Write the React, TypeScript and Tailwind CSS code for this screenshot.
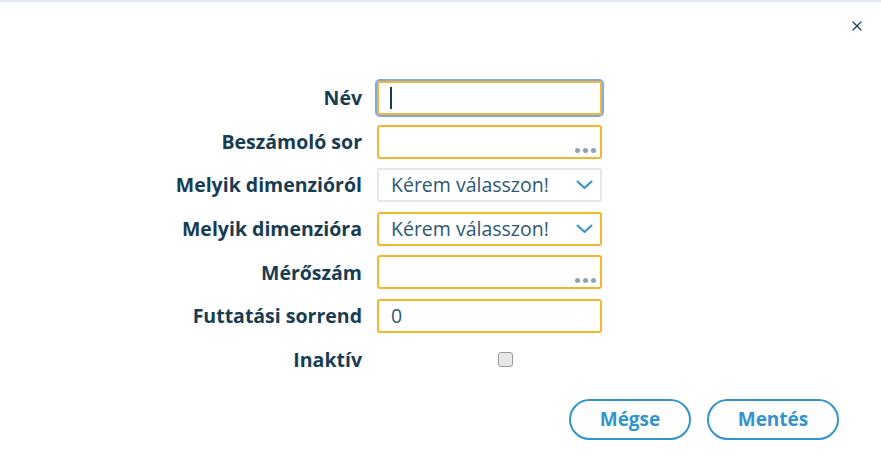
import { X } from "lucide-react";

const labelCls = "w-[200px] text-right font-bold text-[19.5px] text-[#173d55] leading-none";

function Dots() {
    return (
        <span className="absolute right-[4px] bottom-[4px] flex gap-[3px]">
            <span className="w-[5px] h-[5px] rounded-full bg-[#8ea3b8]" />
            <span className="w-[5px] h-[5px] rounded-full bg-[#8ea3b8]" />
            <span className="w-[5px] h-[5px] rounded-full bg-[#8ea3b8]" />
        </span>
    );
}

function SelectBox({ required }: { required?: boolean }) {
    return (
        <div
            className={
                required
                    ? "w-[225px] h-[34px] rounded-[3px] border-2 border-[#f8b42c] flex items-center justify-between pl-[12px] pr-[7px]"
                    : "w-[225px] h-[34px] rounded-[3px] border-2 border-[#e3e8ee] flex items-center justify-between pl-[12px] pr-[7px]"
            }
        >
            <span className="text-[19.5px] text-[#2b5877] leading-none">Kérem válasszon!</span>
            <svg width="17" height="10" viewBox="0 0 17 10" fill="none">
                <polyline points="1.5,1.5 8.5,8 15.5,1.5" stroke="#2f95cf" strokeWidth="2" strokeLinecap="round" strokeLinejoin="round" />
            </svg>
        </div>
    );
}

export default function App() {
    return (
        <div className="w-[881px] h-[460px] bg-white border-t-2 border-[#e3e9f0] relative" style={{ fontFamily: '"Open Sans", sans-serif' }}>
            <button className="absolute right-[16px] top-[16px] text-[#173d55]">
                <X size={16} strokeWidth={1.8} />
            </button>

            <div className="pt-[79px] pl-[162px] flex flex-col gap-[9.6px]">
                <div className="flex items-center gap-[15px]">
                    <div className={labelCls}>Név</div>
                    <div className="relative w-[225px] h-[34px] rounded-[3px] border-2 border-[#f8b42c] outline-2 outline-[#7aa8ee]">
                        <span className="absolute left-[11px] top-[4px] w-[2px] h-[22px] bg-[#173d55]" />
                    </div>
                </div>
                <div className="flex items-center gap-[15px]">
                    <div className={labelCls}>Beszámoló sor</div>
                    <div className="relative w-[225px] h-[34px] rounded-[3px] border-2 border-[#f8b42c]">
                        <Dots />
                    </div>
                </div>
                <div className="flex items-center gap-[15px]">
                    <div className={labelCls}>Melyik dimenzióról</div>
                    <SelectBox />
                </div>
                <div className="flex items-center gap-[15px]">
                    <div className={labelCls}>Melyik dimenzióra</div>
                    <SelectBox required />
                </div>
                <div className="flex items-center gap-[15px]">
                    <div className={labelCls}>Mérőszám</div>
                    <div className="relative w-[225px] h-[34px] rounded-[3px] border-2 border-[#f8b42c]">
                        <Dots />
                    </div>
                </div>
                <div className="flex items-center gap-[15px]">
                    <div className={labelCls}>Futtatási sorrend</div>
                    <div className="w-[225px] h-[34px] rounded-[3px] border-2 border-[#f8b42c] flex items-center pl-[12px] text-[19.5px] text-[#2b5877] leading-none">
                        0
                    </div>
                </div>
                <div className="flex items-center gap-[15px] h-[34px]">
                    <div className={labelCls}>Inaktív</div>
                    <div className="w-[225px] pl-[121px]">
                        <div className="w-[15px] h-[15px] rounded-[3px] border border-[#9a9a9a] bg-[#e8e8e8]" />
                    </div>
                </div>
            </div>

            <div className="flex justify-end gap-[16px] pr-[42px] mt-[22px]">
                <button className="w-[122px] h-[41px] rounded-full border-2 border-[#2f95cf] text-[#2f95cf] font-bold text-[19px]">
                    Mégse
                </button>
                <button className="w-[132px] h-[41px] rounded-full border-2 border-[#2f95cf] text-[#2f95cf] font-bold text-[19px]">
                    Mentés
                </button>
            </div>
        </div>
    );
}
